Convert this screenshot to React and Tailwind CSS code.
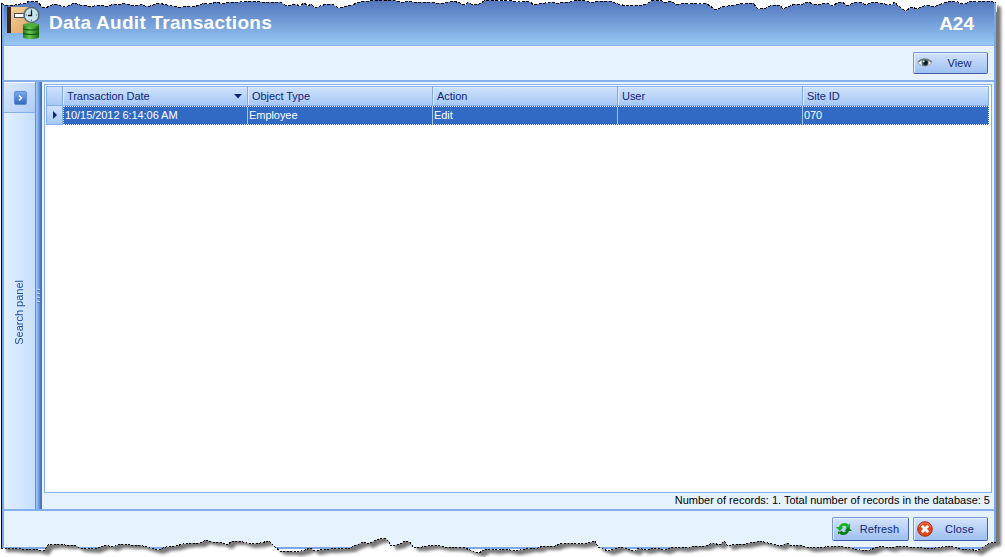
import React from "react";

const topEdge =
  "1,3 5,5 15,5 20,4 27,3 28,1 38,2 42,7 45,8 50,6 54,4 57,4 63,7 68,6 74,3 80,5 86,5 90,7 98,5 104,6 107,7 113,4 118,5 124,3 130,5 136,6 142,4 145,6 150,6 158,3 167,5 172,6 178,7 182,7 188,6 193,7 200,5 204,3 210,4 217,2 222,4 230,2 240,2 250,1 262,2 272,2 280,2 287,6 295,4 300,6 304,3 308,6 311,4 315,8 320,6 327,4 332,4 339,8 347,6 352,5 357,3 363,1 370,1 375,0 395,0 402,3 406,1 412,2 420,2 430,2 435,3 445,3 453,1 460,3 465,5 468,2 473,5 479,4 486,0 512,1 520,2 525,1 530,2 534,5 540,3 545,3 550,2 555,3 558,4 562,2 570,2 578,0 586,1 592,3 598,1 610,1 618,4 627,6 637,5 641,6 648,3 653,0 662,1 665,3 671,1 675,4 681,4 685,3 690,4 694,3 700,4 706,3 710,6 716,10 722,7 728,6 735,5 740,4 753,3 758,9 766,8 772,5 780,5 783,9 790,6 795,4 800,5 803,4 807,2 814,4 820,5 822,4 827,3 833,6 837,3 842,2 848,6 853,3 860,2 866,5 872,2 885,4 891,5 895,2 897,5 905,11 912,7 917,9 921,7 927,5 933,7 941,4 950,1 958,2 960,4 967,3 971,1 980,2 982,1 990,1 996,3";

const bottomEdge =
  "996,542 990,543 985,546 977,551 970,549 960,549 950,546 935,548 922,548 910,547 898,546 890,548 880,546 870,550 860,550 850,548 840,546 825,547 810,548 800,545 792,546 787,543 780,546 768,543 760,541 755,542 745,544 737,544 728,546 724,541 720,545 713,543 705,546 695,546 685,548 673,547 665,550 655,548 645,550 639,548 635,551 627,549 620,547 615,549 608,551 598,547 595,541 588,543 580,544 568,543 560,544 555,546 543,546 538,548 530,548 520,550 515,551 505,549 495,550 485,549 479,553 470,550 465,548 455,547 445,547 435,545 427,546 422,547 413,547 410,542 405,541 400,544 391,546 389,541 384,538 376,540 368,544 364,542 356,545 350,548 330,549 325,549 315,551 310,548 305,550 297,552 290,551 280,551 275,547 269,541 260,543 250,544 240,541 232,541 227,545 220,542 213,542 206,540 200,543 192,543 183,544 176,546 166,547 158,550 150,548 140,545 130,545 120,544 112,547 106,545 103,546 95,549 80,548 75,545 65,545 58,544 48,545 44,551 35,549 22,549 12,548 1,548";

const sheet = "M" + topEdge + " L" + bottomEdge + " Z";
const outside = "M0,0 H1005 V557 H0 Z " + sheet;

function TornPaper() {
  return (
    <svg className="pointer-events-none absolute inset-0" width="1005" height="557" viewBox="0 0 1005 557">
      <defs>
        <clipPath id="outside">
          <path d={outside} clipRule="evenodd" />
        </clipPath>
        <filter id="soft" x="-5%" y="-5%" width="110%" height="110%">
          <feGaussianBlur stdDeviation="1.7" />
        </filter>
      </defs>
      <path d={outside} fill="#fff" fillRule="evenodd" shapeRendering="crispEdges" />
      <g clipPath="url(#outside)">
        <path d={sheet} transform="translate(5 4)" fill="#777" filter="url(#soft)" />
        <path d="M0 0H997V12H0Z" fill="#fff" />
      </g>
      <polyline points={topEdge} fill="none" stroke="#000" strokeDasharray="3 1.5" shapeRendering="crispEdges" />
      <polyline points={bottomEdge} fill="none" stroke="#000" strokeDasharray="2 1.5" shapeRendering="crispEdges" />
    </svg>
  );
}

function AuditIcon() {
  return (
    <svg width="34" height="34" viewBox="0 0 34 34">
      <defs>
        <linearGradient id="book" x1="0" y1="0" x2="1" y2="1">
          <stop offset="0" stopColor="#f7d79c" />
          <stop offset="1" stopColor="#dba067" />
        </linearGradient>
        <linearGradient id="db" x1="0" x2="1">
          <stop offset="0" stopColor="#237c1d" />
          <stop offset=".4" stopColor="#69c94f" />
          <stop offset="1" stopColor="#176915" />
        </linearGradient>
      </defs>
      <rect x="0" y="1" width="25" height="26" fill="url(#book)" />
      <rect x="0" y="1" width="4" height="26" fill="#3d261b" />
      <rect x="7.500" y="7.500" width="10" height="4" fill="#fff" stroke="#4c4a55" />
      <circle cx="24.500" cy="9" r="7.500" fill="#c7e4ea" stroke="#586b74" strokeWidth="1.600" />
      <path d="M24.500 3v1.500M24.500 13.500V15M18.500 9H20M29 9h1.500" stroke="#547581" />
      <path d="M24.500 4.500V9.500H21" fill="none" stroke="#111" strokeWidth="1.300" />
      <path d="M16 19c0-2.500 16-2.500 16 0v12c0 2.700-16 2.700-16 0z" fill="url(#db)" />
      <ellipse cx="24" cy="19" rx="7.500" ry="1.700" fill="#4ead3b" />
      <path d="M16 22.500c3 2 13 2 16 0M16 27c3 2 13 2 16 0" fill="none" stroke="#155c18" strokeWidth="1.200" />
    </svg>
  );
}

function EyeIcon() {
  return (
    <svg width="16" height="12" viewBox="0 0 16 12">
      <path d="M.5 6Q7-1 15 6Q8 12 .5 6Z" fill="#f9f9f5" stroke="#a9aaa8" />
      <path d="M1 5Q7-1 15 5" fill="none" stroke="#77746e" strokeWidth="1.300" />
      <circle cx="8" cy="5.800" r="3.500" fill="#4a7076" />
      <circle cx="8.500" cy="5.800" r="2.300" fill="#061b20" />
      <circle cx="6.700" cy="4.500" r=".9" fill="#dceaea" />
    </svg>
  );
}

function RefreshIcon() {
  return (
    <svg width="16" height="14" viewBox="0 0 16 14">
      <path d="M3 5C4 2 6.500.7 9 .9C10.500 1 11.700 1.800 12.500 2.800L14 1.500V6.500H9L10.600 4.900C9 3.200 6.500 3.500 5.800 5.200H7.500L3.800 9L0 5Z" fill="#14b41c" />
      <path d="M13 9C12 12 9.500 13.300 7 13.100C5.500 13 4.300 12.200 3.500 11.200L2 12.500V9.200L3.800 10L7 7.500L5.400 9.100C7 10.800 9.500 10.500 10.200 8.800H8.500L12.200 5L16 9Z" fill="#087d16" />
    </svg>
  );
}

function CloseIcon() {
  return (
    <svg width="16" height="16" viewBox="0 0 16 16">
      <circle cx="8" cy="8" r="7.300" fill="#e34418" stroke="#a52e17" />
      <path d="M2 6C3 1 12 .5 14 6" fill="none" stroke="#f38561" />
      <path d="M4.800 4.800l6.400 6.400M11.200 4.800l-6.400 6.400" stroke="#fff" strokeWidth="2.800" />
    </svg>
  );
}

function Button({ icon, width, children }) {
  return (
    <button
      className={
        "flex items-center rounded-[2px] border border-[#7795d6] border-r-[#4964ad] border-b-[#3f5ba9] bg-linear-to-b from-[#d3e3fb] to-[#9fc0f1] pl-[3px] text-left text-[11px] tracking-[0.15px] text-[#12267e] shadow-[inset_1px_1px_0_#e8f2ff] " +
        width
      }
    >
      <span className="flex w-4 shrink-0 justify-center">{icon}</span>
      <span className="flex-1 pr-[1px] text-center">{children}</span>
    </button>
  );
}

const columns = ["Transaction Date", "Object Type", "Action", "User", "Site ID"];
const record = ["10/15/2012 6:14:06 AM", "Employee", "Edit", "", "070"];

function AuditTable() {
  return (
    <div className="h-[409px] border border-[#86aeea] bg-white pt-[1px] pr-[2px] pl-[1px]">
      <div className="grid h-5 grid-cols-[16px_185px_185px_185px_185px_1fr] border border-[#86aeea] bg-linear-to-b from-[#cfe2fc] to-[#a7c8f5] text-[#10247c]">
        <div className="border-r border-[#83a9e6]" />
        {columns.map((name, i) => (
          <div key={name} className="flex items-center justify-between border-r border-[#83a9e6] pr-[5px] pl-[4px] shadow-[inset_1px_1px_0_#dcebff] last:border-r-0">
            <span className="tracking-[-0.05px]">{name}</span>
            {i === 0 && (
              <svg width="8" height="5" viewBox="0 0 8 5">
                <path d="M0 0H8L4 4.500Z" fill="#10247c" />
              </svg>
            )}
          </div>
        ))}
      </div>
      <div className="grid h-[19px] grid-cols-[17px_1fr]">
        <div className="flex items-center justify-center border border-t-0 border-[#86aeea] bg-linear-to-b from-[#cfe2fc] to-[#a7c8f5]">
          <svg width="4" height="8" viewBox="0 0 4 8">
            <path d="M0 0L4 4L0 8Z" fill="#10247c" />
          </svg>
        </div>
        <div className="grid grid-cols-[184px_185px_185px_185px_1fr] border border-dotted border-[#d5e4fb] bg-[#316ac5] text-white">
          {record.map((value, i) => (
            <div key={i} className="flex items-center border-r border-[#a4c2ee] pb-[1px] pl-[1px] tracking-[-0.06px] last:border-r-0">
              {value}
            </div>
          ))}
        </div>
      </div>
    </div>
  );
}

export default function App() {
  return (
    <div className="relative flex h-[557px] w-[1005px] flex-col overflow-hidden bg-white font-['Liberation_Sans',Arial,sans-serif] text-[11px] leading-[13px]">
      <div className="ml-[1px] flex h-[549px] w-[996px] flex-col border-r-[3px] border-b-2 border-l border-[#78a8e8] border-l-black bg-[#78a8e8] pl-[2px]">
        <header className="flex h-[45px] shrink-0 items-start bg-linear-to-b from-[#5174bb] to-[#98c9f4] pt-[6px] pr-[20px] pl-[3px] text-[19px] leading-[34px] font-bold text-white">
          <AuditIcon />
          <h1 className="ml-2 tracking-[0.27px]">Data Audit Transactions</h1>
          <span className="mt-[1px] ml-auto">A24</span>
        </header>
        <div className="flex h-[37px] shrink-0 justify-end border-t border-b-2 border-[#86aeea] bg-[#e6f3ff] pt-[6px] pr-[6px] pb-[6px] shadow-[inset_0_1px_0_#fff]">
          <Button width="w-[75px]" icon={<EyeIcon />}>View</Button>
        </div>
        <main className="flex h-[427px] shrink-0 bg-[#e6f3ff]">
          <aside className="flex w-[31px] shrink-0 flex-col border-t border-white bg-linear-to-r from-[#e1efff] to-[#c7dffc] text-[#1f4ea7]">
            <div className="flex h-[30px] items-center justify-center border-b border-[#86aeea] bg-linear-to-br from-[#dceaff] to-[#aecbf5]">
              <div className="ml-[2px] flex h-[14px] w-[13px] items-center justify-center rounded-[2px] border border-[#5d8cd5] bg-linear-to-b from-[#78a9ed] to-[#3569bd]">
                <svg width="5" height="6" viewBox="0 0 5 6">
                  <path d="M1 .5L3.500 3L1 5.500" fill="none" stroke="#fff" strokeWidth="1.400" />
                </svg>
              </div>
            </div>
            <div className="flex flex-1 items-center justify-center">
              <span className="mt-[3px] rotate-180 whitespace-nowrap [writing-mode:vertical-rl]">Search panel</span>
            </div>
          </aside>
          <div className="flex w-[7px] shrink-0 items-center justify-center border-r border-l border-[#5f92de] border-r-[#4773c2] bg-linear-to-r from-[#a5ccf8] via-[#78a5e4] to-[#416cbd]">
            <div className="flex flex-col gap-[2px]">
              <i className="h-[2px] w-[3px] border-t border-[#bdd8ff] bg-[#5578b2]" />
              <i className="h-[2px] w-[3px] border-t border-[#bdd8ff] bg-[#5578b2]" />
              <i className="h-[2px] w-[3px] border-t border-[#bdd8ff] bg-[#5578b2]" />
              <i className="h-[2px] w-[3px] border-t border-[#bdd8ff] bg-[#5578b2]" />
            </div>
          </div>
          <section className="min-w-0 flex-1 pt-[2px] pr-[2px] pl-[2px]">
            <AuditTable />
            <p className="pt-[1px] pr-[2px] text-right text-black">
              Number of records: 1. Total number of records in the database: 5
            </p>
          </section>
        </main>
        <footer className="flex flex-1 items-start justify-end border-t-2 border-[#86aeea] bg-[#e6f3ff] pt-[6px] pr-[6px]">
          <div className="flex h-6 gap-1">
            <Button width="w-[77px]" icon={<RefreshIcon />}>Refresh</Button>
            <Button width="w-[75px]" icon={<CloseIcon />}>Close</Button>
          </div>
        </footer>
      </div>
      <TornPaper />
    </div>
  );
}
